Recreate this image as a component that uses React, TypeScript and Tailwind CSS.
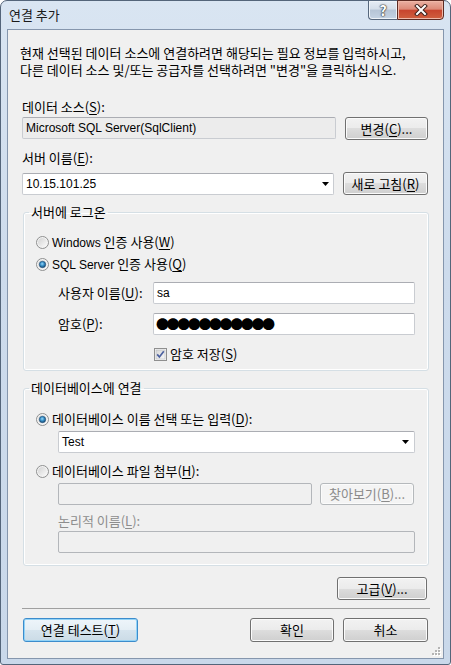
import React from "react";

function U({ c }: { c: string }) {
  return <span className="underline decoration-1 underline-offset-[2px]">{c}</span>;
}

function L({ children }: { children: React.ReactNode }) {
  return <span className="font-['Liberation_Sans','Noto_Sans_CJK_KR',sans-serif] text-[12px]">{children}</span>;
}

type BtnProps = { className?: string; children: React.ReactNode; variant?: "normal" | "default" | "disabled" };

function Btn({ className = "", children, variant = "normal" }: BtnProps) {
  const v =
    variant === "default"
      ? "border-[#3c8ccc] bg-[linear-gradient(#eef5fa_0%,#e4eef5_50%,#d6e4ee_50%,#cbdbe6_100%)] shadow-[inset_0_0_0_1px_#92d3f7]"
      : variant === "disabled"
      ? "border-[#b5b9bc] bg-[#f4f4f4] text-[#8b8b8b] shadow-[inset_0_0_0_1px_#fbfbfb]"
      : "border-[#707070] bg-[linear-gradient(#f2f2f2_0%,#ebebeb_50%,#dddddd_50%,#cfcfcf_100%)] shadow-[inset_0_0_0_1px_#fbfbfb]";
  return (
    <div className={`flex shrink-0 items-center justify-center rounded-[3px] border leading-[16px] ${v} ${className}`}>
      {children}
    </div>
  );
}

function Arrow() {
  return (
    <svg width="7" height="4" viewBox="0 0 7 4" className="shrink-0">
      <path d="M0 0 H7 L3.5 4 Z" fill="#000" />
    </svg>
  );
}

function Radio({ checked }: { checked?: boolean }) {
  return (
    <svg width="13" height="13" viewBox="0 0 13 13" className="shrink-0">
      <defs>
        <linearGradient id="rbg" x1="0" y1="0" x2="1" y2="1">
          <stop offset="0" stopColor="#d2d2d2" />
          <stop offset="1" stopColor="#fbfbfb" />
        </linearGradient>
        <radialGradient id="rdot" cx="0.45" cy="0.4" r="0.6">
          <stop offset="0" stopColor="#9ad7f8" />
          <stop offset="0.5" stopColor="#3790c8" />
          <stop offset="1" stopColor="#17456e" />
        </radialGradient>
      </defs>
      <circle cx="6.5" cy="6.5" r="6" fill="#f4f4f4" stroke="#8e8f8f" strokeWidth="1" />
      <circle cx="6.5" cy="6.5" r="4.5" fill="url(#rbg)" />
      {checked && <circle cx="6.5" cy="6.5" r="3.2" fill="url(#rdot)" stroke="#1c4f7a" strokeWidth="0.6" />}
    </svg>
  );
}

function Check() {
  return (
    <svg width="13" height="13" viewBox="0 0 13 13" className="shrink-0">
      <defs>
        <linearGradient id="cbg" x1="0" y1="0" x2="1" y2="1">
          <stop offset="0" stopColor="#d6d6d6" />
          <stop offset="1" stopColor="#f8f8f8" />
        </linearGradient>
      </defs>
      <rect x="0.5" y="0.5" width="12" height="12" fill="#f4f4f4" stroke="#8f8f8f" />
      <rect x="2" y="2" width="9" height="9" fill="url(#cbg)" stroke="#aeb3b9" strokeWidth="0.5" />
      <path d="M3.2 6.4 L5.4 9 L9.8 3.2" fill="none" stroke="#4c61a0" strokeWidth="1.7" />
    </svg>
  );
}

const box = "h-[22px] shrink-0 rounded-[2px] border border-[#c9ccd1] border-t-[#abadb3]";

export default function App() {
  return (
    <div className="h-[665px] w-[451px] bg-white font-['Noto_Sans_CJK_KR',sans-serif] text-[13px] text-black">
      <div className="flex h-[665px] w-[451px] flex-col rounded-t-[7px] rounded-b-[3px] border border-[#54657a] bg-[linear-gradient(#d9e5f2_0%,#cddbec_40%,#c9d8ea_100%)]">
        {/* title bar */}
        <div className="flex h-[28px] shrink-0 items-start justify-between">
          <span className="ml-[8px] mt-[6px] leading-[16px] text-[#1a1a1a]">연결 추가</span>
          <div className="-mt-px mr-[6px] flex">
            <div className="flex h-[20px] w-[29px] items-center justify-center rounded-bl-[4px] border border-r-0 border-[#56677c] bg-[linear-gradient(#e6edf5_0%,#d4dee9_45%,#b6c5d6_50%,#c4d3e3_100%)] shadow-[inset_0_0_0_1px_#eef3f8]">
              <span className="text-[14px] font-bold leading-[16px] text-white [text-shadow:0_0_1px_#333,0_0_1px_#333,0_0_2px_#333]">?</span>
            </div>
            <div className="flex h-[20px] w-[47px] items-center justify-center rounded-br-[4px] border border-[#5c2a22] bg-[linear-gradient(#eab0a2_0%,#dc8a78_45%,#c8452e_52%,#d0603f_100%)] shadow-[inset_0_0_0_1px_#efb8a8]">
              <svg width="14" height="12" viewBox="0 0 14 12">
                <path d="M3 2 L11 10 M11 2 L3 10" stroke="#40211b" strokeWidth="4" strokeLinecap="square" />
                <path d="M3 2 L11 10 M11 2 L3 10" stroke="#ffffff" strokeWidth="2" strokeLinecap="square" />
              </svg>
            </div>
          </div>
        </div>

        {/* client */}
        <div className="relative mx-[6px] mb-[5px] flex flex-1 flex-col border border-[#8596ad] bg-[#f0f0f0]">
          <p className="ml-[12px] mt-[14px] leading-[17px]">
            현재 선택된 데이터 소스에 연결하려면 해당되는 필요 정보를 입력하시고,
            <br />
            다른 데이터 소스 및/또는 공급자를 선택하려면 "변경"을 클릭하십시오.
          </p>

          <div className="flex flex-col px-[14px]">
            <div className="mt-[21px] leading-[16px]">
              데이터 소스(<U c="S" />):
            </div>
            <div className="mt-[2px] flex h-[23px] items-start">
              <div className={`${box} flex w-[314px] items-center bg-[#ececec] pl-[3px] leading-[16px]`}>
                <L>Microsoft SQL Server(SqlClient)</L>
              </div>
              <Btn className="ml-[9px] h-[23px] w-[83px]">
                변경(<U c="C" />)...
              </Btn>
            </div>

            <div className="mt-[10px] leading-[16px]">
              서버 이름(<U c="E" />):
            </div>
            <div className="mt-[6px] flex h-[23px] items-start">
              <div className={`${box} mt-px flex w-[312px] items-center justify-between bg-white pl-[3px] pr-[4px] leading-[16px]`}>
                <L>10.15.101.25</L>
                <Arrow />
              </div>
              <Btn className="ml-[9px] h-[23px] w-[85px]">
                새로 고침(<U c="R" />)
              </Btn>
            </div>

            {/* group 1 */}
            <fieldset className="ml-px mt-[9px] w-[406px] rounded-[3px] border border-[#d5dfe5] pb-[8px] shadow-[inset_0_0_0_1px_#ffffff]">
              <legend className="ml-[5px] px-[2px] leading-[16px]">서버에 로그온</legend>
              <div className="mt-[14px] flex items-center gap-[3px] pl-[12px] leading-[16px]">
                <Radio />
                <span>
                  <L>Windows</L> 인증 사용(<U c="W" />)
                </span>
              </div>
              <div className="mt-[5px] flex items-center gap-[3px] pl-[12px] leading-[16px]">
                <Radio checked />
                <span>
                  <L>SQL Server</L> 인증 사용(<U c="Q" />)
                </span>
              </div>
              <div className="mt-[9px] flex items-center pl-[34px]">
                <span className="w-[95px] leading-[16px]">
                  사용자 이름(<U c="U" />):
                </span>
                <div className={`${box} flex w-[262px] items-center bg-white pl-[3px] leading-[16px]`}>
                  <L>sa</L>
                </div>
              </div>
              <div className="mt-[9px] flex items-center pl-[34px]">
                <span className="w-[95px] leading-[16px]">
                  암호(<U c="P" />):
                </span>
                <div className={`${box} flex w-[262px] items-center bg-white pl-[2px]`}>
                  <span className="text-[13px] leading-[16px] tracking-[-2.4px]">●●●●●●●●●●●</span>
                </div>
              </div>
              <div className="mt-[11px] flex items-center gap-[3px] pl-[130px] leading-[16px]">
                <Check />
                <span>
                  암호 저장(<U c="S" />)
                </span>
              </div>
            </fieldset>

            {/* group 2 */}
            <fieldset className="ml-px mt-[9px] w-[406px] rounded-[3px] border border-[#d5dfe5] pb-[12px] shadow-[inset_0_0_0_1px_#ffffff]">
              <legend className="ml-[5px] px-[2px] leading-[16px]">데이터베이스에 연결</legend>
              <div className="mt-[15px] flex items-center gap-[3px] pl-[12px] leading-[16px]">
                <Radio checked />
                <span>
                  데이터베이스 이름 선택 또는 입력(<U c="D" />):
                </span>
              </div>
              <div className="mt-[4px] pl-[34px]">
                <div className={`${box} flex w-[357px] items-center justify-between bg-white pl-[3px] pr-[5px] leading-[16px]`}>
                  <L>Test</L>
                  <Arrow />
                </div>
              </div>
              <div className="mt-[10px] flex items-center gap-[3px] pl-[12px] leading-[16px]">
                <Radio />
                <span>
                  데이터베이스 파일 첨부(<U c="H" />):
                </span>
              </div>
              <div className="mt-[4px] flex items-start pl-[34px]">
                <div className="h-[22px] w-[254px] shrink-0 rounded-[2px] border border-[#b3b6ba] bg-[#f0f0f0]" />
                <Btn variant="disabled" className="ml-[8px] h-[22px] w-[94px]">
                  찾아보기(<U c="B" />)...
                </Btn>
              </div>
              <div className="mt-[8px] pl-[34px] leading-[16px] text-[#8d8d8d]">
                논리적 이름(<U c="L" />):
              </div>
              <div className="mt-[2px] pl-[34px]">
                <div className="h-[22px] w-[357px] rounded-[2px] border border-[#b3b6ba] bg-[#f0f0f0]" />
              </div>
            </fieldset>

            <div className="mt-[11px] flex justify-end pr-[2px]">
              <Btn className="h-[23px] w-[90px]">
                고급(<U c="V" />)...
              </Btn>
            </div>

            <div className="mt-[8px] h-px w-[408px] bg-[#a0a0a0]" />

            <div className="mt-[9px] flex items-start">
              <Btn variant="default" className="ml-px h-[24px] w-[115px]">
                연결 테스트(<U c="T" />)
              </Btn>
              <div className="flex-1" />
              <Btn className="h-[24px] w-[84px]">확인</Btn>
              <Btn className="ml-[9px] mr-[1px] h-[24px] w-[85px]">취소</Btn>
            </div>
          </div>

          <svg width="10" height="10" viewBox="0 0 10 10" className="absolute bottom-[2px] right-[2px]">
            {[
              [7, 1],
              [4, 4],
              [7, 4],
              [1, 7],
              [4, 7],
              [7, 7],
            ].map(([x, y], i) => (
              <g key={i}>
                <rect x={x + 1} y={y + 1} width="2" height="2" fill="#ffffff" />
                <rect x={x} y={y} width="2" height="2" fill="#b4b4b4" />
              </g>
            ))}
          </svg>
        </div>
      </div>
    </div>
  );
}
